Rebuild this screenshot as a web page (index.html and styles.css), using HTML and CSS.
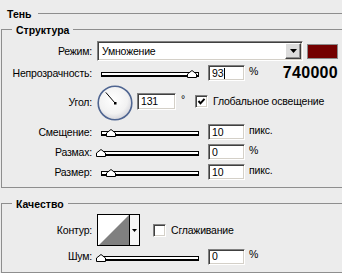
FILE: index.html
```html
<!DOCTYPE html>
<html lang="ru">
<head>
    <meta charset="UTF-8">
    <meta name="viewport" content="width=device-width, initial-scale=1.0">
    <title>Тень</title>
    <link rel="stylesheet" href="styles.css">
</head>
<body>
    <div class="section-title">Тень</div>

    <fieldset class="group group-structure">
        <legend>Структура</legend>

        <div class="row row-mode">
            <label class="label">Режим:</label>
            <div class="select">
                <span class="select-value">Умножение</span>
                <span class="select-button">
                    <svg width="7" height="4" viewBox="0 0 7 4"><polygon points="0,0 7,0 3.5,4" fill="#000"/></svg>
                </span>
            </div>
            <span class="swatch"></span>
        </div>

        <div class="row">
            <label class="label">Непрозрачность:</label>
            <div class="slider">
                <div class="slider-track"></div>
                <svg class="slider-thumb" style="left: 93%" width="10" height="8" viewBox="0 0 10 8"><polygon points="0.5,7.5 0.5,4 5,0.5 9.5,4 9.5,7.5" fill="#fff" stroke="#000"/></svg>
            </div>
            <div class="field">93<span class="caret"></span></div>
            <span class="unit">%</span>
            <span class="hex">740000</span>
        </div>

        <div class="row row-angle">
            <label class="label">Угол:</label>
            <svg class="dial" width="36" height="36" viewBox="0 0 36 36">
                <defs>
                    <radialGradient id="dialFill" cx="45%" cy="40%" r="60%">
                        <stop offset="0%" stop-color="#ffffff"/>
                        <stop offset="70%" stop-color="#f2f2f2"/>
                        <stop offset="100%" stop-color="#d6d6dc"/>
                    </radialGradient>
                </defs>
                <circle cx="18" cy="18" r="16.8" fill="url(#dialFill)" stroke="#4f6591" stroke-width="1.6"/>
                <line x1="18" y1="18" x2="8.8" y2="7.4" stroke="#000" stroke-width="1"/>
                <rect x="17" y="17" width="2.5" height="2.5" fill="#000"/>
            </svg>
            <div class="field field-angle">131</div>
            <span class="unit unit-degree">°</span>
            <span class="checkbox checked">
                <svg width="9" height="9" viewBox="0 0 9 9"><polyline points="1.5,4 3.5,6.3 7.5,1.8" fill="none" stroke="#000" stroke-width="2"/></svg>
            </span>
            <span class="check-text">Глобальное освещение</span>
        </div>

        <div class="row">
            <label class="label">Смещение:</label>
            <div class="slider">
                <div class="slider-track"></div>
                <svg class="slider-thumb" style="left: 10%" width="10" height="8" viewBox="0 0 10 8"><polygon points="0.5,7.5 0.5,4 5,0.5 9.5,4 9.5,7.5" fill="#fff" stroke="#000"/></svg>
            </div>
            <div class="field">10</div>
            <span class="unit">пикс.</span>
        </div>

        <div class="row">
            <label class="label">Размах:</label>
            <div class="slider">
                <div class="slider-track"></div>
                <svg class="slider-thumb" style="left: 0%" width="10" height="8" viewBox="0 0 10 8"><polygon points="0.5,7.5 0.5,4 5,0.5 9.5,4 9.5,7.5" fill="#fff" stroke="#000"/></svg>
            </div>
            <div class="field">0</div>
            <span class="unit">%</span>
        </div>

        <div class="row">
            <label class="label">Размер:</label>
            <div class="slider">
                <div class="slider-track"></div>
                <svg class="slider-thumb" style="left: 10%" width="10" height="8" viewBox="0 0 10 8"><polygon points="0.5,7.5 0.5,4 5,0.5 9.5,4 9.5,7.5" fill="#fff" stroke="#000"/></svg>
            </div>
            <div class="field">10</div>
            <span class="unit">пикс.</span>
        </div>
    </fieldset>

    <fieldset class="group group-quality">
        <legend>Качество</legend>

        <div class="row row-contour">
            <label class="label">Контур:</label>
            <div class="contour">
                <svg class="contour-preview" width="31" height="30" viewBox="0 0 31 30"><polygon points="1,30 31,0 31,30" fill="#808080"/></svg>
                <span class="contour-drop">
                    <svg width="5" height="3" viewBox="0 0 5 3"><polygon points="0,0 5,0 2.5,3" fill="#000"/></svg>
                </span>
            </div>
            <span class="checkbox checkbox-smooth"></span>
            <span class="check-text">Сглаживание</span>
        </div>

        <div class="row row-noise">
            <label class="label">Шум:</label>
            <div class="slider">
                <div class="slider-track"></div>
                <svg class="slider-thumb" style="left: 0%" width="10" height="8" viewBox="0 0 10 8"><polygon points="0.5,7.5 0.5,4 5,0.5 9.5,4 9.5,7.5" fill="#fff" stroke="#000"/></svg>
            </div>
            <div class="field">0</div>
            <span class="unit">%</span>
        </div>
    </fieldset>
</body>
</html>
```

FILE: styles.css
```css
body {
    margin: 0;
    background-color: #ececec;
    font-family: "Liberation Sans", Arial, sans-serif;
    font-size: 10.5px;
    letter-spacing: -0.2px;
    color: #000;
    overflow: hidden;
}

.section-title {
    display: flex;
    padding: 8px 0 0 7px;
    font-weight: bold;
    letter-spacing: 0;
    line-height: 13px;
}

.section-title::after {
    content: '';
    flex: 1;
    align-self: flex-start;
    margin: 5px 0 0 6px;
    border-top: 1px solid #8e8e8e;
}

.group {
    margin: 1px 0 0 1px;
    padding: 0 0 7px 0;
    border: 1px solid #8e8e8e;
    border-right: none;
    min-width: 0;
}

.group legend {
    margin-left: 10px;
    padding: 2px 4px 0;
    font-weight: bold;
    letter-spacing: 0;
    line-height: 13px;
}

.group-quality {
    margin-top: 8px;
}

.row {
    display: flex;
    align-items: center;
    height: 16px;
    margin-top: 4px;
}

.row-mode {
    height: 20px;
}

.row-angle {
    height: 35px;
}

.row-contour {
    height: 32px;
    margin-top: 3px;
}

.row-noise {
    height: 17px;
    margin-top: 2px;
}

.label {
    flex: none;
    width: 90px;
    margin-right: 5px;
    text-align: right;
    line-height: 13px;
}

/* champs en creux, style Windows */
.select,
.field,
.checkbox {
    box-sizing: border-box;
    background-color: #fff;
    border: 1px solid;
    border-color: #808080 #fff #fff #808080;
    box-shadow: inset 1px 1px 0 #404040, inset -1px -1px 0 #d4d0c8;
}

.select {
    display: flex;
    align-items: center;
    width: 206px;
    height: 20px;
}

.select-value {
    flex: 1;
    padding-left: 4px;
}

.select-button {
    display: flex;
    align-items: center;
    justify-content: center;
    box-sizing: border-box;
    width: 16px;
    height: 16px;
    margin-right: 1px;
    background-color: #dcdcdc;
    border: 1px solid;
    border-color: #fff #404040 #404040 #fff;
    box-shadow: inset -1px -1px 0 #909090;
}

.swatch {
    box-sizing: border-box;
    width: 31px;
    height: 15px;
    margin-left: 4px;
    background-color: #740000;
    border: 1px solid #8c8c8c;
}

.slider {
    position: relative;
    flex: none;
    width: 98px;
    height: 16px;
    margin-left: 4px;
    margin-right: 9px;
}

.slider-track {
    margin-top: 7px;
    height: 2px;
    background-color: #fff;
    border: 1px solid #000;
    border-bottom-width: 2px;
}

.slider-thumb {
    position: absolute;
    top: 5px;
    transform: translateX(-50%);
}

.field {
    display: flex;
    align-items: center;
    width: 37px;
    height: 16px;
    padding-left: 3px;
    line-height: 13px;
}

.field-angle {
    width: 39px;
    height: 17px;
    margin-left: 4px;
    margin-bottom: 3px;
}

.caret {
    display: inline-block;
    width: 1px;
    height: 11px;
    margin-left: 1px;
    background-color: #000;
}

.unit {
    align-self: flex-start;
    margin-left: 4px;
    line-height: 13px;
}

.unit-degree {
    align-self: center;
    margin: 0 0 6px 5px;
}

.hex {
    margin: 0 4px 0 auto;
    font-size: 16px;
    font-weight: bold;
    letter-spacing: 0.3px;
    line-height: 18px;
}

.dial {
    flex: none;
}

.checkbox {
    display: flex;
    align-items: center;
    justify-content: center;
    flex: none;
    width: 13px;
    height: 13px;
}

.checkbox.checked {
    margin: 0 0 3px 10px;
}

.checkbox-smooth {
    margin-left: 13px;
}

.check-text {
    margin-left: 5px;
    line-height: 13px;
}

.row-angle .check-text {
    margin-bottom: 3px;
}

.contour {
    display: flex;
    box-sizing: border-box;
    width: 43px;
    height: 32px;
    background-color: #fff;
    border: 1px solid #000;
}

.contour-preview {
    display: block;
}

.contour-drop {
    display: flex;
    align-items: center;
    justify-content: center;
    flex: 1;
    background-color: #f6f6f6;
    border-left: 1px solid #000;
}
```
